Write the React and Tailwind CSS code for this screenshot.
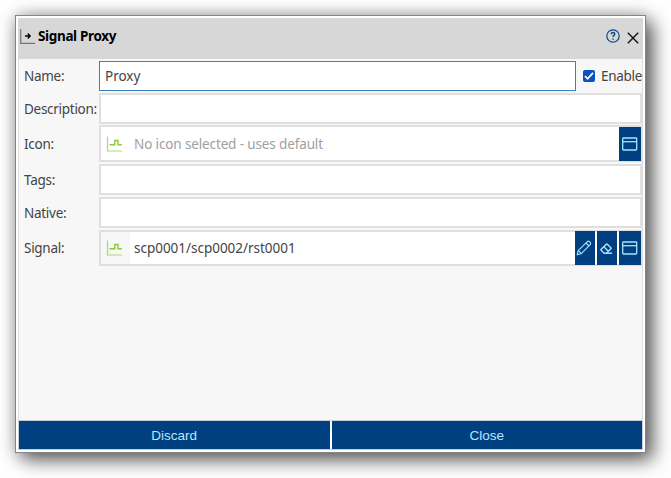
import React from "react";

function SignalIcon() {
  return (
    <svg className="h-[18px] w-[18px] shrink-0" viewBox="0 0 18 18" fill="none">
      <path d="M1.5 1.5v14.5H16" stroke="#a9da70" strokeWidth="1.2" />
      <path d="M3.5 9.7h5.3V5.5h3.2v4.2h3.8" stroke="#8fc640" strokeWidth="1.4" />
    </svg>
  );
}

function WindowIcon() {
  return (
    <svg className="h-[14px] w-4" viewBox="0 0 16 14" fill="none" stroke="#a9e2ff" strokeWidth="1.3">
      <rect x="0.7" y="1" width="14" height="12" rx="0.8" />
      <path d="M.7 4.7h14" />
    </svg>
  );
}

function PencilIcon() {
  return (
    <svg className="-ml-0.5 h-4 w-4" viewBox="0 0 16 16" fill="none" stroke="#a9e2ff" strokeWidth="1.15" strokeLinejoin="round">
      <path d="M1.2 14.8l1-4.1L11.3 1.6q1.2-.9 2.5.3t.4 2.7L5.2 13.7z" />
      <path d="M2.3 10.7l2.9 3M10 3l3 3" />
    </svg>
  );
}

function EraserIcon() {
  return (
    <svg className="-ml-0.5 h-[13px] w-[13px]" viewBox="0 0 13 13" fill="none" stroke="#a9e2ff" strokeWidth="1.45" strokeLinejoin="round">
      <path d="M4.1 11.2L1.2 8.3q-.5-.5 0-1L6.3 2.2q.5-.5 1 0l3.5 3.5q.5.5 0 1l-4.5 4.5zM3.9 4.7l4.4 4.5M4.1 11.2H12" />
    </svg>
  );
}

function IconButton({ className, children }) {
  return (
    <button className={`flex shrink-0 items-center justify-center bg-[#004080] ${className}`}>
      {children}
    </button>
  );
}

function Row({ label, height, children }) {
  return (
    <div className={`flex items-center ${height}`}>
      <label className="w-[75px] shrink-0 whitespace-nowrap tracking-[-0.28px]">{label}</label>
      {children}
    </div>
  );
}

const box = "h-full min-w-0 flex-1 border-2 border-[#dfdfdf] bg-white";

export default function App() {
  return (
    <div className="h-[478px] w-[671px] overflow-hidden bg-white pl-[15px] pt-[15px]">
      <div className="flex h-[438px] w-[631px] flex-col border border-[#858585] bg-white p-0.5 font-['Noto_Sans',sans-serif] text-[13.5px] leading-5 text-[#444] shadow-[7px_7px_18px_0px_rgba(0,0,0,0.6),0px_0px_16px_0px_rgba(0,0,0,0.25)]">
        <header className="flex h-[41px] shrink-0 items-center bg-[#d7d7d7] pb-[5px] pl-0.5 pr-1 text-black">
          <svg className="h-[15px] w-[15px]" viewBox="0 0 15 15" fill="none">
            <path d="M.7 0v14.3H15" stroke="#777" strokeWidth="1.2" />
            <path d="M5 7h5M7.7 4.5L10.2 7 7.7 9.5" stroke="#000" strokeWidth="1.3" />
          </svg>
          <h1 className="ml-[3px] flex-1 text-[13.5px] font-bold tracking-[-0.35px]">Signal Proxy</h1>
          <svg className="mr-[7px] h-[14px] w-[14px]" viewBox="0 0 14 14" fill="none" stroke="#07498a" strokeWidth="1.2">
            <circle cx="7" cy="7" r="6.2" />
            <path d="M5.2 5.2q.1-1.7 1.8-1.7t1.8 1.6c0 1.3-1.8 1.3-1.8 3M7 9.5v1.3" strokeWidth="1.4" />
          </svg>
          <svg className="mt-[3px] h-3 w-3" viewBox="0 0 12 12" stroke="#111" strokeWidth="1.4">
            <path d="M.8.8l10.4 10.4M11.2.8L.8 11.2" />
          </svg>
        </header>

        <main className="flex min-h-0 flex-1 flex-col border-x border-[#dedede] bg-[#f7f7f7] pl-[5px] pt-0.5">
          <Row label="Name:" height="mb-0.5 h-[30px]">
            <div className="flex h-full w-[477px] items-center border border-[#3b82bd] bg-white pb-px pl-[5px]">Proxy</div>
            <span className="ml-[7px] flex h-3 w-3 items-center justify-center rounded-[2px] bg-[#0752bd]">
              <svg className="h-[10px] w-[10px]" viewBox="0 0 10 10" fill="none" stroke="white" strokeWidth="1.8">
                <path d="M1 5.2l2.6 2.6L9 1.8" />
              </svg>
            </span>
            <span className="ml-[6px] whitespace-nowrap pb-px tracking-[-0.3px]">Enable</span>
          </Row>
          <Row label="Description:" height="mb-px h-[31px]">
            <div className={box} />
          </Row>
          <Row label="Icon:" height="mb-0.5 h-[37px]">
            <div className={`${box} flex items-center`}>
              <span className="ml-[5px] mr-[10px] flex"><SignalIcon /></span>
              <span className="flex-1 tracking-[-0.13px] text-[#a0a0a0]">No icon selected - uses default</span>
              <IconButton className="-mr-px h-[34px] w-[22px]"><WindowIcon /></IconButton>
            </div>
          </Row>
          <Row label="Tags:" height="mb-0.5 h-[31px]">
            <div className={box} />
          </Row>
          <Row label="Native:" height="mb-0.5 h-[31px]">
            <div className={box} />
          </Row>
          <Row label="Signal:" height="h-[36px]">
            <div className={`${box} flex items-center`}>
              <span className="mr-1 flex h-full w-[29px] items-center bg-[#f7f7f7] pl-[5px]"><SignalIcon /></span>
              <span className="flex-1 pb-px tracking-[-0.02px]">scp0001/scp0002/rst0001</span>
              <div className="-mr-px flex gap-0.5">
                <IconButton className="h-[34px] w-[20px]"><PencilIcon /></IconButton>
                <IconButton className="h-[34px] w-[20px]"><EraserIcon /></IconButton>
                <IconButton className="h-[34px] w-[22px]"><WindowIcon /></IconButton>
              </div>
            </div>
          </Row>
        </main>

        <footer className="flex h-[30px] shrink-0 gap-0.5 border border-[#c9cdd2] bg-white font-['Liberation_Sans',Arial,sans-serif] text-[13.5px] text-[#b5e8ff]">
          <button className="flex-1 bg-[#004080] pt-px">Discard</button>
          <button className="flex-1 bg-[#004080] pt-px">Close</button>
        </footer>
      </div>
    </div>
  );
}
